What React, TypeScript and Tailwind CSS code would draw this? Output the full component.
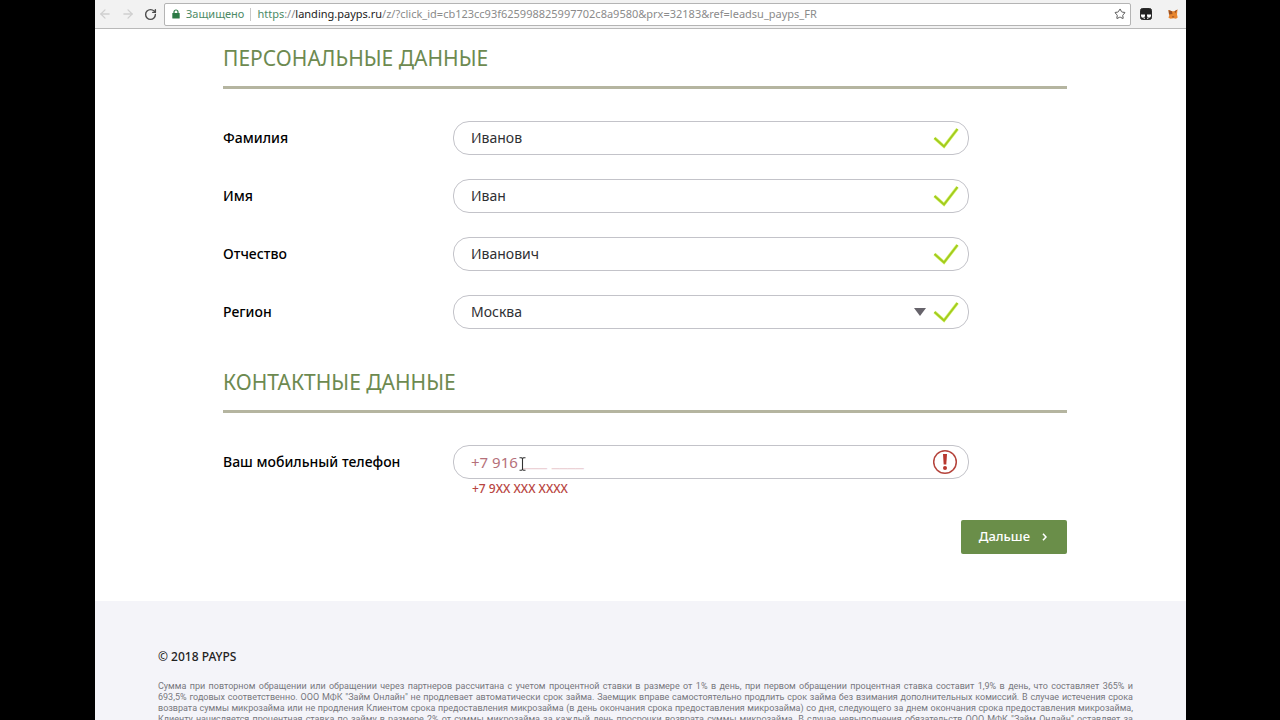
import React, { useState } from 'react';
import { ArrowLeft, ArrowRight, RotateCw, Star } from 'lucide-react';

const CheckMark = () => (
    <svg viewBox="0 0 26 22" className="w-[26px] h-[22px] shrink-0" fill="none" aria-hidden="true">
        <path d="M1.5 11 11 19.5 24.5 2" stroke="#d9f77a" strokeWidth="3.2" />
        <path d="M1.5 11 11 19.5 24.5 2" stroke="#a3cb1e" strokeWidth="2" />
    </svg>
);

const ErrorMark = () => (
    <svg viewBox="0 0 26 26" className="w-[26px] h-[26px] shrink-0" fill="none" aria-hidden="true">
        <circle cx="12" cy="13" r="11.3" stroke="#b5443c" strokeWidth="1.5" />
        <path d="M10 5h4l-.7 10.5h-2.6z" fill="#b8382f" />
        <circle cx="12" cy="19" r="2" fill="#b8382f" />
    </svg>
);

const LockIcon = () => (
    <svg viewBox="0 0 8 10" className="w-2 h-[10px] shrink-0" aria-hidden="true">
        <path d="M2 5V3a2 2 0 0 1 4 0v2" fill="none" stroke="#2c7a45" strokeWidth="1.2" />
        <rect x="0.3" y="4" width="7.4" height="5.6" rx="0.6" fill="#2c7a45" />
    </svg>
);

const MaskIcon = () => (
    <svg viewBox="0 0 12 12" className="w-3 h-3" aria-hidden="true">
        <rect x="0.5" y="0.5" width="11" height="11" rx="2" fill="#222" stroke="#2b2b2b" />
        <path d="M1 6.5h4v1.2a2 2 0 0 1-4 0zM7 6.5h4v1.2a2 2 0 0 1-4 0z" fill="#fff" />
        <path d="M3 10.8h2V9.6zM9 10.8H7V9.6z" fill="#fff" />
    </svg>
);

const FoxIcon = () => (
    <svg viewBox="0 0 10 10" className="w-[10px] h-[10px]" aria-hidden="true">
        <path d="M.5 1 4 2.2h2.5L9.5.5 9 5.5l.7 3-1.7 1.2-2.5-.5-3 .5-2-1 .7-2.5z" fill="#e8862f" />
        <path d="M.5 1 4 2.2 4.5 5 1 5.5zM9.5.5 6.5 2.2l.7 2z" fill="#9c5222" />
        <path d="M4 7h2.2L6 8.5H4z" fill="#b5622a" />
    </svg>
);

interface FieldRowProps {
    id: string;
    label: string;
    children: React.ReactNode;
}

const FieldRow = ({ id, label, children }: FieldRowProps) => (
    <div className="flex items-center">
        <label htmlFor={id} className="w-[230px] shrink-0 text-sm font-medium text-black">{label}</label>
        <div className="flex-1 max-w-[516px] h-[34px] flex items-center rounded-2xl border border-[#c3c3c9] bg-white pl-[17px] pr-[9px]">
            {children}
        </div>
    </div>
);

const SectionTitle = ({ children }: { children: React.ReactNode }) => (
    <h2 className="border-b-[3px] border-[#b5b5a0] pb-3 text-[21px] leading-8 text-[#6d8a50]">{children}</h2>
);

const LEGAL_LINES = [
    'Сумма при повторном обращении или обращении через партнеров рассчитана с учетом процентной ставки в размере от 1% в день, при первом обращении процентная ставка составит 1,9% в день, что составляет 365% и',
    '693,5% годовых соответственно. ООО МФК "Займ Онлайн" не продлевает автоматически срок займа. Заемщик вправе самостоятельно продлить срок займа без взимания дополнительных комиссий. В случае истечения срока',
    'возврата суммы микрозайма или не продления Клиентом срока предоставления микрозайма (в день окончания срока предоставления микрозайма) со дня, следующего за днем окончания срока предоставления микрозайма,',
    'Клиенту начисляется процентная ставка по займу в размере 2% от суммы микрозайма за каждый день просрочки возврата суммы микрозайма. В случае невыполнения обязательств ООО МФК "Займ Онлайн" оставляет за',
];

export default function App() {
    const [person, setPerson] = useState({ surname: 'Иванов', name: 'Иван', patronymic: 'Иванович' });
    const [phone, setPhone] = useState('+7 916');

    const inputClass = 'flex-1 min-w-0 bg-transparent text-sm text-[#2f2f33] outline-none';

    return (
        <div className="h-screen overflow-hidden bg-black pl-[95px] pr-[94px] font-['Noto_Sans','Open_Sans',sans-serif]">
            <div className="min-h-full bg-white">
                {/* Browser toolbar */}
                <header className="h-[29px] flex items-center border-b border-[#b9b9b9] bg-[#f2f2f2] pl-[3px] pr-2">
                    <button aria-label="Назад" className="w-[23px] text-[#cfcfcf]"><ArrowLeft size={14} strokeWidth={2.2} /></button>
                    <button aria-label="Вперёд" className="w-[23px] text-[#cfcfcf]"><ArrowRight size={14} strokeWidth={2.2} /></button>
                    <button aria-label="Обновить" className="w-5 text-[#4c4c4c]"><RotateCw size={13} strokeWidth={2.6} /></button>
                    <div className="flex-1 h-[23px] flex items-center rounded-xs border border-[#b4b4b4] bg-white pl-[7px] pr-1 text-[11px] whitespace-nowrap">
                        <LockIcon />
                        <span className="ml-[6px] text-[#4d8a66]">Защищено</span>
                        <span className="mx-[6px] h-[13px] w-px bg-[#c9c9c9]" />
                        <span className="flex-1 text-[#8b8b8b]">
                            <span className="text-[#4d8a66]">https</span>://<span className="text-[#222]">landing.payps.ru</span>/z/?click_id=cb123cc93f625998825997702c8a9580&amp;prx=32183&amp;ref=leadsu_payps_FR
                        </span>
                        <button aria-label="Добавить в закладки" className="text-[#555]"><Star size={12} strokeWidth={2} /></button>
                    </div>
                    <div className="flex items-center gap-4 pl-[9px]">
                        <MaskIcon />
                        <FoxIcon />
                    </div>
                </header>

                <form className="pl-[128px] pr-[119px] pt-[13px] pb-[47px]" onSubmit={e => e.preventDefault()}>
                    <SectionTitle>ПЕРСОНАЛЬНЫЕ ДАННЫЕ</SectionTitle>
                    <div className="mt-8 flex flex-col gap-6">
                        <FieldRow id="surname" label="Фамилия">
                            <input id="surname" className={inputClass} value={person.surname} onChange={e => setPerson({ ...person, surname: e.target.value })} />
                            <CheckMark />
                        </FieldRow>
                        <FieldRow id="name" label="Имя">
                            <input id="name" className={inputClass} value={person.name} onChange={e => setPerson({ ...person, name: e.target.value })} />
                            <CheckMark />
                        </FieldRow>
                        <FieldRow id="patronymic" label="Отчество">
                            <input id="patronymic" className={inputClass} value={person.patronymic} onChange={e => setPerson({ ...person, patronymic: e.target.value })} />
                            <CheckMark />
                        </FieldRow>
                        <FieldRow id="region" label="Регион">
                            <select id="region" className={`${inputClass} appearance-none`} defaultValue="Москва">
                                <option>Москва</option>
                                <option>Санкт-Петербург</option>
                            </select>
                            <svg viewBox="0 0 12 8" className="mr-[7px] w-3 h-2 shrink-0" aria-hidden="true">
                                <path d="M0 0h12L6 8z" fill="#66636b" />
                            </svg>
                            <CheckMark />
                        </FieldRow>
                    </div>

                    <div className="mt-[37px]">
                        <SectionTitle>КОНТАКТНЫЕ ДАННЫЕ</SectionTitle>
                    </div>
                    <div className="mt-8">
                        <FieldRow id="phone" label="Ваш мобильный телефон">
                            <input id="phone" className="w-[52px] bg-transparent text-[15px] text-[#b5707a] outline-none" value={phone} onChange={e => setPhone(e.target.value)} />
                            {/* Unfilled part of the number mask, with the text cursor over it */}
                            <span className="relative flex-1 pb-[6px] text-lg leading-5 text-[#ecd2d6]">
                                ___ ____
                                <svg viewBox="0 0 7 14" className="absolute -left-1 top-2 w-[7px] h-[14px]" fill="none" aria-hidden="true">
                                    <path d="M.5.8h2l1 .7 1-.7h2M3.5 1v12M.5 13.2h2l1-.7 1 .7h2" stroke="#333" strokeWidth="1.1" />
                                </svg>
                            </span>
                            <ErrorMark />
                        </FieldRow>
                        <p className="pl-[249px] text-xs leading-5 font-medium text-[#b8453f]">+7 9XX XXX XXXX</p>
                    </div>
                    <div className="mt-[21px] flex justify-end">
                        <button type="submit" className="h-[34px] flex items-center gap-3 rounded-xs bg-[#6a8e49] pl-[18px] pr-5 text-[13px] font-medium text-white">
                            Дальше
                            <svg viewBox="0 0 5 8" className="w-[5px] h-2" fill="none" aria-hidden="true">
                                <path d="M1 .7 4 4 1 7.3" stroke="#fff" strokeWidth="1.6" />
                            </svg>
                        </button>
                    </div>
                </form>

                <footer className="bg-[#f4f4f9] pl-[63px] pr-[53px] pt-[46px] pb-10">
                    <p className="text-xs leading-5 font-medium text-[#222]">© 2018 PAYPS</p>
                    <p className="mt-[14px] font-['Roboto','Noto_Sans',sans-serif] text-[9px] leading-[11px] text-[#77777d]">
                        {LEGAL_LINES.map(line => (
                            <span key={line} className="block whitespace-nowrap [text-align-last:justify]">{line}</span>
                        ))}
                    </p>
                </footer>
            </div>
        </div>
    );
}
